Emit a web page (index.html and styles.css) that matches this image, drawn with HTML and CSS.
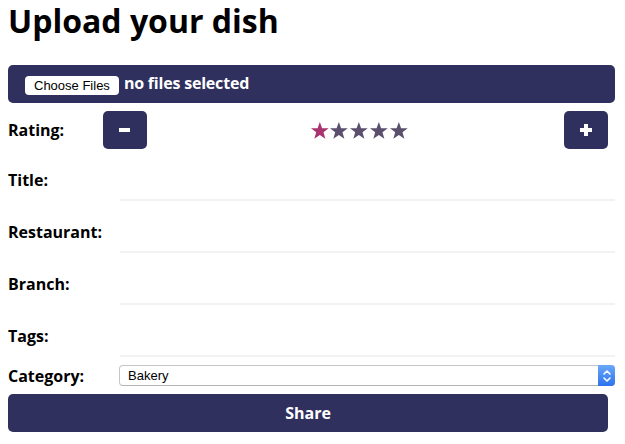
FILE: index.html
```html
<!DOCTYPE html>
<html lang="en">
<head>
<meta charset="utf-8">
<title>Upload your dish</title>
<link rel="stylesheet" href="styles.css">
</head>
<body>
<h1 class="title">Upload your dish</h1>
<form class="upload-form">
  <div class="file-bar">
    <button type="button" class="file-btn">Choose Files</button>
    <span class="file-status">no files selected</span>
  </div>

  <div class="rating-row">
    <span class="label rating-label">Rating:</span>
    <button type="button" class="square-btn" aria-label="Decrease">
      <svg width="12" height="12" viewBox="0 0 12 12"><rect x="0" y="4" width="11" height="4" fill="#fff"/></svg>
    </button>
    <div class="stars">
      <svg class="star star-on" viewBox="0 0 20 19"><path d="M10 0.8 L12.3 7.1 L19 7.2 L13.7 11.3 L15.6 17.8 L10 14 L4.4 17.8 L6.3 11.3 L1 7.2 L7.7 7.1 Z"/></svg>
      <svg class="star" viewBox="0 0 20 19"><path d="M10 0.8 L12.3 7.1 L19 7.2 L13.7 11.3 L15.6 17.8 L10 14 L4.4 17.8 L6.3 11.3 L1 7.2 L7.7 7.1 Z"/></svg>
      <svg class="star" viewBox="0 0 20 19"><path d="M10 0.8 L12.3 7.1 L19 7.2 L13.7 11.3 L15.6 17.8 L10 14 L4.4 17.8 L6.3 11.3 L1 7.2 L7.7 7.1 Z"/></svg>
      <svg class="star" viewBox="0 0 20 19"><path d="M10 0.8 L12.3 7.1 L19 7.2 L13.7 11.3 L15.6 17.8 L10 14 L4.4 17.8 L6.3 11.3 L1 7.2 L7.7 7.1 Z"/></svg>
      <svg class="star" viewBox="0 0 20 19"><path d="M10 0.8 L12.3 7.1 L19 7.2 L13.7 11.3 L15.6 17.8 L10 14 L4.4 17.8 L6.3 11.3 L1 7.2 L7.7 7.1 Z"/></svg>
    </div>
    <button type="button" class="square-btn" aria-label="Increase">
      <svg width="12" height="12" viewBox="0 0 12 12"><rect x="4" y="0" width="4" height="12" fill="#fff"/><rect x="0" y="4" width="12" height="4" fill="#fff"/></svg>
    </button>
  </div>

  <div class="field-row">
    <label class="label field-label">Title:</label>
    <input class="field-input" type="text">
  </div>
  <div class="field-row">
    <label class="label field-label">Restaurant:</label>
    <input class="field-input" type="text">
  </div>
  <div class="field-row">
    <label class="label field-label">Branch:</label>
    <input class="field-input" type="text">
  </div>
  <div class="field-row">
    <label class="label field-label">Tags:</label>
    <input class="field-input" type="text">
  </div>

  <div class="category-row">
    <label class="label category-label">Category:</label>
    <div class="select-wrap">
      <select class="select">
        <option>Bakery</option>
      </select>
      <span class="select-stepper">
        <svg width="10" height="14" viewBox="0 0 10 14"><path d="M2 5 L5 2 L8 5 M2 9 L5 12 L8 9" fill="none" stroke="#fff" stroke-width="1.6" stroke-linecap="round" stroke-linejoin="round"/></svg>
      </span>
    </div>
  </div>

  <button type="button" class="share-btn">Share</button>
</form>
</body>
</html>
```

FILE: styles.css
```css
html, body {
  margin: 0;
  padding: 0;
  background: #ffffff;
}

body {
  padding: 0 8px;
  font-family: "Open Sans", "Liberation Sans", sans-serif;
  color: #000;
}

.title {
  margin: 0;
  font-size: 32px;
  line-height: 42px;
  font-weight: 700;
}

.upload-form {
  margin-top: 23px;
  width: 607px;
  display: flex;
  flex-direction: column;
}

.file-bar {
  height: 38px;
  box-sizing: border-box;
  background: #30305e;
  border-radius: 5px;
  display: flex;
  align-items: center;
  padding-left: 17px;
  gap: 5px;
}

.file-btn {
  height: 19px;
  padding: 0 9px;
  border: none;
  border-radius: 4px;
  background: #fff;
  color: #000;
  font-family: "Liberation Sans", Arial, sans-serif;
  font-size: 13px;
  line-height: 19px;
  margin-top: 3px;
}

.file-status {
  color: #fff;
  font-weight: 700;
  font-size: 16px;
  letter-spacing: -0.2px;
  margin-bottom: 3px;
}

.label {
  font-weight: 700;
  font-size: 16px;
  line-height: 22px;
}

.rating-row {
  margin-top: 8px;
  width: 600px;
  height: 38px;
  display: flex;
  align-items: center;
}

.rating-label {
  width: 95px;
  flex: none;
}

.square-btn {
  width: 44px;
  height: 38px;
  flex: none;
  border: none;
  border-radius: 5px;
  background: #30305e;
  display: flex;
  align-items: center;
  justify-content: center;
  padding: 0;
}

.stars {
  flex: 1;
  display: flex;
  justify-content: center;
  padding-left: 7px;
  padding-top: 1px;
}

.star {
  width: 19.7px;
  height: 19px;
  fill: #5b4f6e;
}

.star-on {
  fill: #a8336f;
}

.field-row {
  display: flex;
  height: 52px;
}

.field-label {
  width: 112px;
  flex: none;
  align-self: flex-end;
  padding-bottom: 10px;
}

.field-input {
  flex: 1;
  min-width: 0;
  height: 100%;
  box-sizing: border-box;
  border: none;
  border-bottom: 2px solid #f2f2f2;
  outline: none;
  background: transparent;
  padding: 0;
  font-family: inherit;
  font-size: 16px;
}

.category-row {
  margin-top: 8px;
  display: flex;
  align-items: center;
  height: 21px;
}

.category-label {
  width: 111px;
  flex: none;
}

.select-wrap {
  position: relative;
  flex: 1;
  height: 21px;
}

.select {
  -webkit-appearance: none;
  appearance: none;
  display: block;
  width: 100%;
  height: 21px;
  box-sizing: border-box;
  border: 1px solid #c6c6c6;
  border-bottom-color: #b4b4b4;
  border-radius: 4px;
  background: #fff;
  font-family: "Liberation Sans", Arial, sans-serif;
  font-size: 13px;
  color: #000;
  padding: 0 0 0 8px;
  margin: 0;
}

.select-stepper {
  position: absolute;
  top: 0;
  right: 0;
  width: 17px;
  height: 21px;
  border-radius: 0 4px 4px 0;
  background: linear-gradient(#6aa8f8, #2e72ee);
  display: flex;
  align-items: center;
  justify-content: center;
}

.share-btn {
  margin-top: 8px;
  width: 600px;
  height: 38px;
  border: none;
  border-radius: 5px;
  background: #30305e;
  color: #fff;
  font-family: "Open Sans", "Liberation Sans", sans-serif;
  font-weight: 700;
  font-size: 16px;
  padding: 0;
}
```
